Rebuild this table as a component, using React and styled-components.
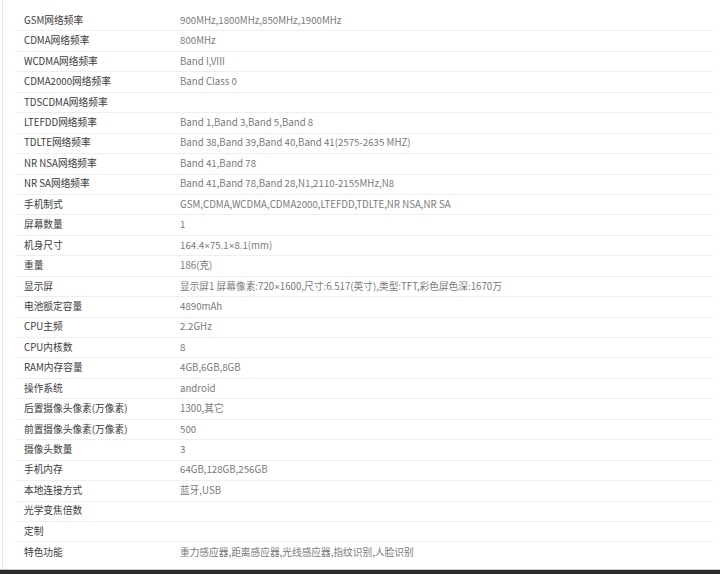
import React from "react";
import styled, { createGlobalStyle } from "styled-components";

const Global = createGlobalStyle`
  html, body { margin: 0; padding: 0; background: #fff; }
  body { font-family: "Noto Sans CJK SC", "Noto Sans", sans-serif; }
`;

const Page = styled.div`
  height: 574px;
  box-sizing: border-box;
  display: flex;
  flex-direction: column;
  border-left: 1px solid #e2e2e2;
  margin-left: 2px;
  padding-top: 11px;
`;

const Table = styled.div`
  display: flex;
  flex-direction: column;
  margin-left: 12px;
  width: 698px;
  flex: 1;
`;

const Row = styled.div`
  display: grid;
  grid-template-columns: 165px 1fr;
  align-items: center;
  height: 20.45px;
  box-sizing: border-box;
  border-bottom: ${(p) => (p.$last ? "none" : "1px solid #efefef")};
  font-size: 9.7px;
  line-height: 1;
  white-space: nowrap;
`;

const Label = styled.div`
  padding-left: 9px;
  color: #3c3c3c;
`;

const Value = styled.div`
  color: #7a7a7a;
`;

const Times = styled.span`
  font-family: "Liberation Sans", sans-serif;
`;

const Footer = styled.div`
  height: 4px;
  margin-left: -3px;
  border-top: 1px solid #c8c8c8;
  background: #2b2b2b;
`;

const rows = [
  ["GSM网络频率", "900MHz,1800MHz,850MHz,1900MHz"],
  ["CDMA网络频率", "800MHz"],
  ["WCDMA网络频率", "Band I,VIII"],
  ["CDMA2000网络频率", "Band Class 0"],
  ["TDSCDMA网络频率", ""],
  ["LTEFDD网络频率", "Band 1,Band 3,Band 5,Band 8"],
  ["TDLTE网络频率", "Band 38,Band 39,Band 40,Band 41(2575-2635 MHZ)"],
  ["NR NSA网络频率", "Band 41,Band 78"],
  ["NR SA网络频率", "Band 41,Band 78,Band 28,N1,2110-2155MHz,N8"],
  ["手机制式", "GSM,CDMA,WCDMA,CDMA2000,LTEFDD,TDLTE,NR NSA,NR SA"],
  ["屏幕数量", "1"],
  ["机身尺寸", "164.4×75.1×8.1(mm)"],
  ["重量", "186(克)"],
  ["显示屏", "显示屏1 屏幕像素:720×1600,尺寸:6.517(英寸),类型:TFT,彩色屏色深:1670万"],
  ["电池额定容量", "4890mAh"],
  ["CPU主频", "2.2GHz"],
  ["CPU内核数", "8"],
  ["RAM内存容量", "4GB,6GB,8GB"],
  ["操作系统", "android"],
  ["后置摄像头像素(万像素)", "1300,其它"],
  ["前置摄像头像素(万像素)", "500"],
  ["摄像头数量", "3"],
  ["手机内存", "64GB,128GB,256GB"],
  ["本地连接方式", "蓝牙,USB"],
  ["光学变焦倍数", ""],
  ["定制", ""],
  ["特色功能", "重力感应器,距离感应器,光线感应器,指纹识别,人脸识别"],
];

function renderValue(v) {
  const parts = v.split("×");
  return parts.map((p, i) => (
    <React.Fragment key={i}>
      {i > 0 && <Times>×</Times>}
      {p}
    </React.Fragment>
  ));
}

export default function App() {
  return (
    <>
      <Global />
      <Page>
        <Table>
          {rows.map(([k, v], i) => (
            <Row key={k} $last={i === rows.length - 1}>
              <Label>{k}</Label>
              <Value>{renderValue(v)}</Value>
            </Row>
          ))}
        </Table>
        <Footer />
      </Page>
    </>
  );
}
